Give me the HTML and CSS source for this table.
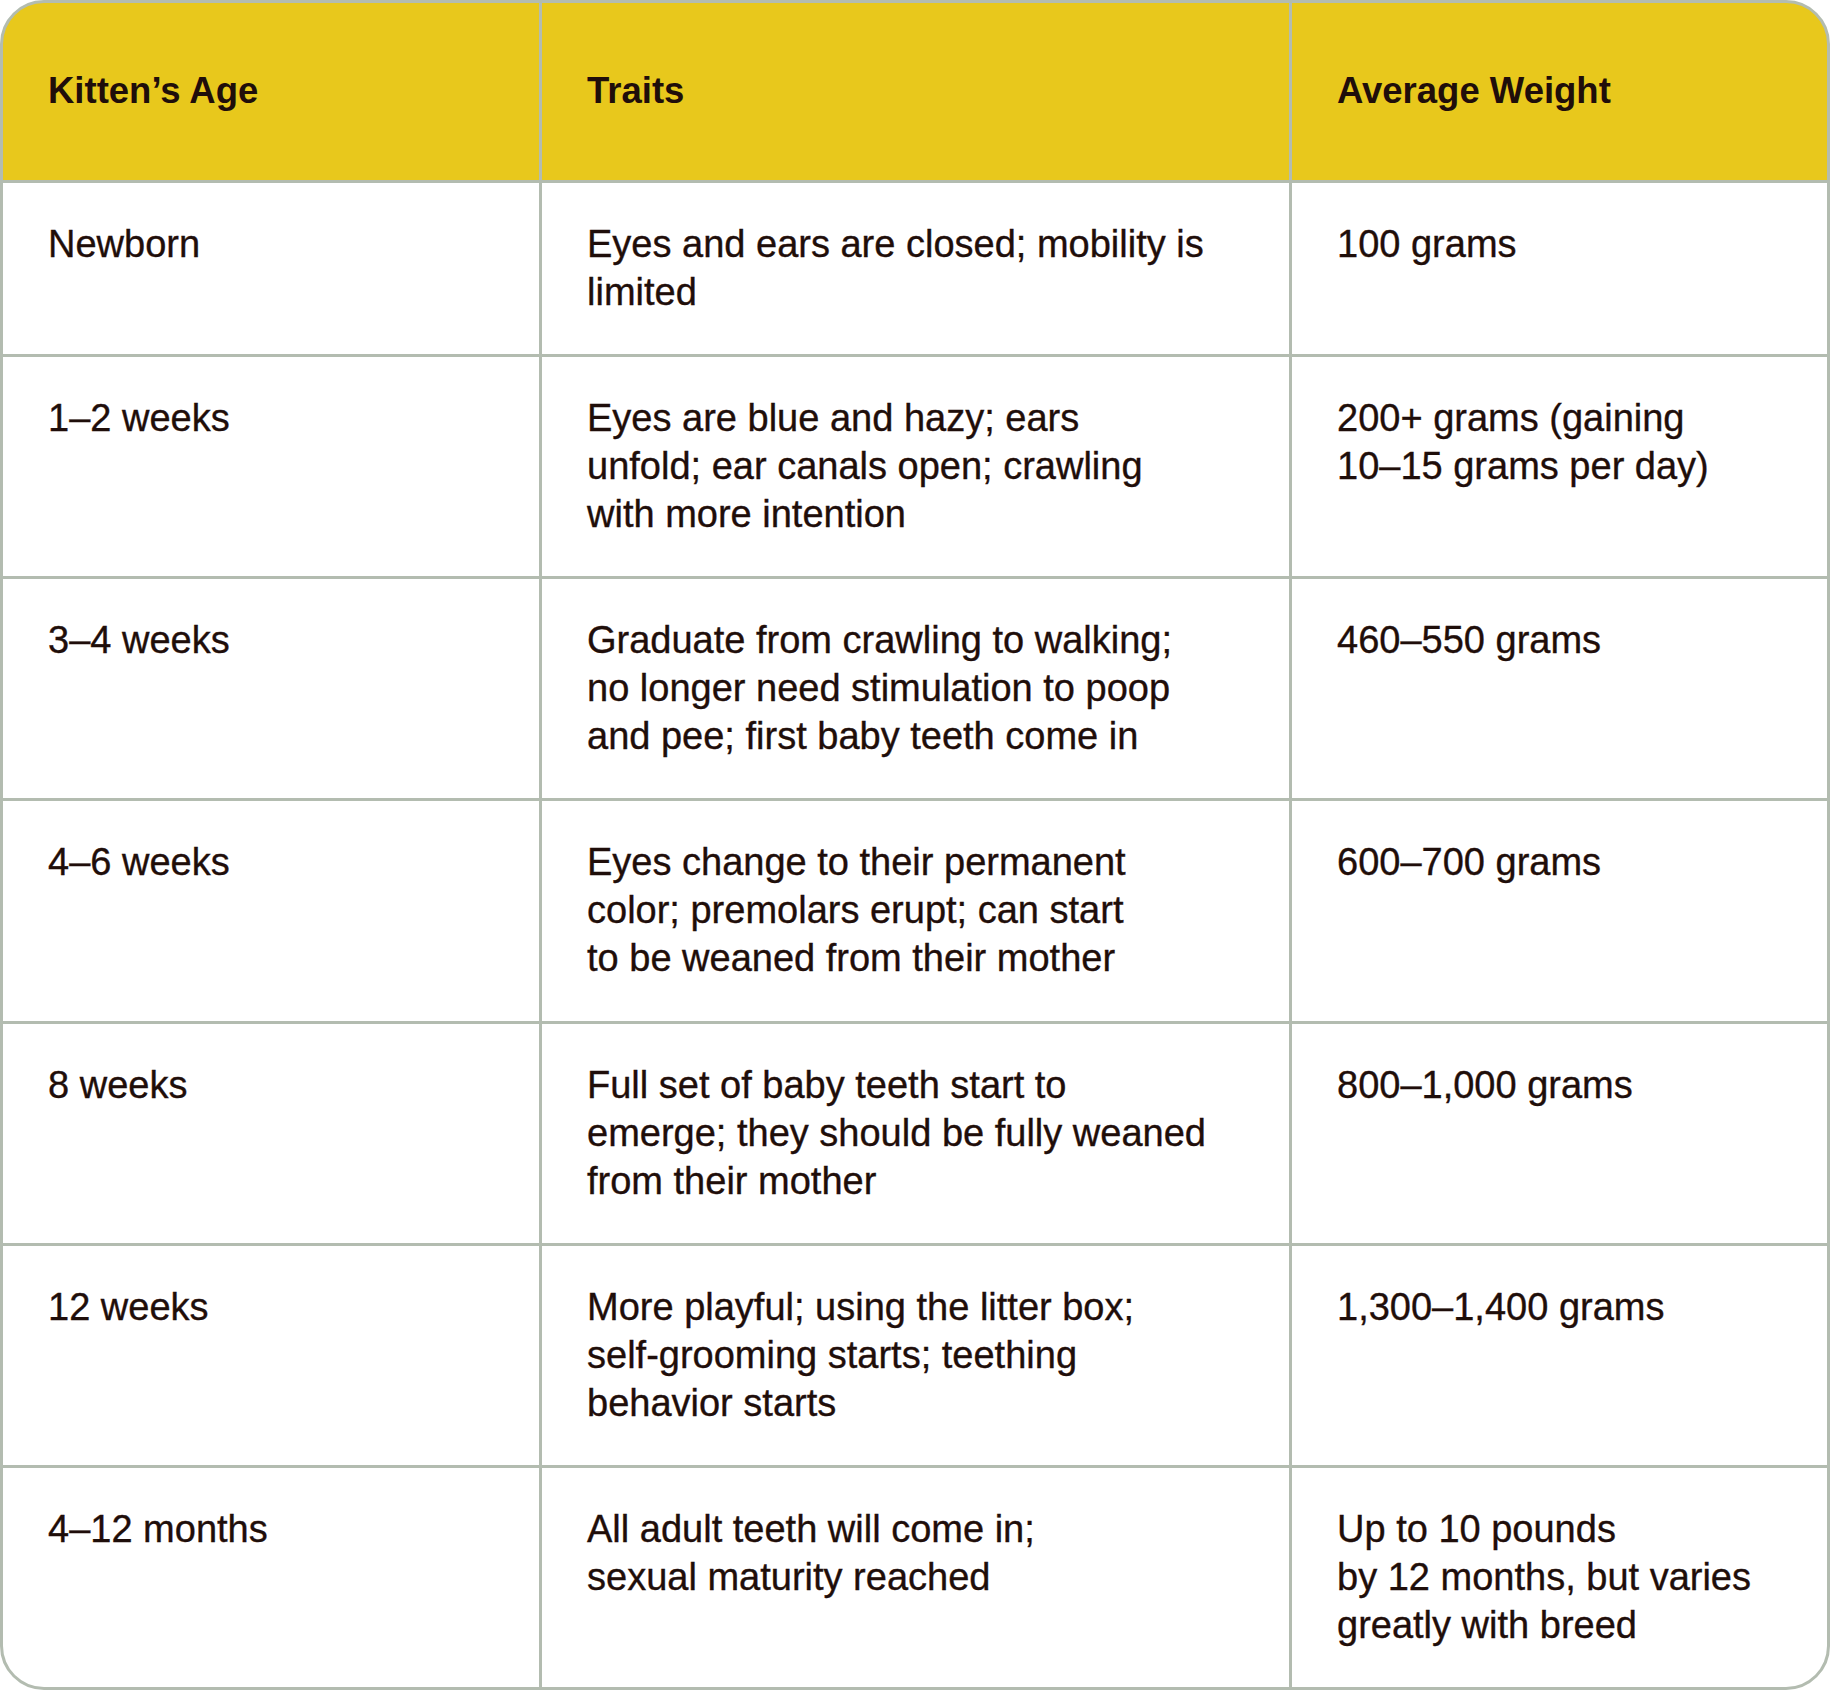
FILE: index.html
```html
<!DOCTYPE html>
<html lang="en">
<head>
<meta charset="utf-8">
<title>Kitten Growth Chart</title>
<link rel="stylesheet" href="styles.css">
</head>
<body>
<div class="chart">
  <div class="cell head">Kitten’s Age</div>
  <div class="cell head">Traits</div>
  <div class="cell head">Average Weight</div>

  <div class="cell">Newborn</div>
  <div class="cell">Eyes and ears are closed; mobility is<br>limited</div>
  <div class="cell">100 grams</div>

  <div class="cell">1–2 weeks</div>
  <div class="cell">Eyes are blue and hazy; ears<br>unfold; ear canals open; crawling<br>with more intention</div>
  <div class="cell">200+ grams (gaining<br>10–15 grams per day)</div>

  <div class="cell">3–4 weeks</div>
  <div class="cell">Graduate from crawling to walking;<br>no longer need stimulation to poop<br>and pee; first baby teeth come in</div>
  <div class="cell">460–550 grams</div>

  <div class="cell">4–6 weeks</div>
  <div class="cell">Eyes change to their permanent<br>color; premolars erupt; can start<br>to be weaned from their mother</div>
  <div class="cell">600–700 grams</div>

  <div class="cell">8 weeks</div>
  <div class="cell">Full set of baby teeth start to<br>emerge; they should be fully weaned<br>from their mother</div>
  <div class="cell">800–1,000 grams</div>

  <div class="cell">12 weeks</div>
  <div class="cell">More playful; using the litter box;<br>self-grooming starts; teething<br>behavior starts</div>
  <div class="cell">1,300–1,400 grams</div>

  <div class="cell">4–12 months</div>
  <div class="cell">All adult teeth will come in;<br>sexual maturity reached</div>
  <div class="cell">Up to 10 pounds<br>by 12 months, but varies<br>greatly with breed</div>
</div>
</body>
</html>
```
FILE: styles.css
```css
html, body {
  margin: 0;
  padding: 0;
  background: #ffffff;
}

.chart {
  width: 1830px;
  height: 1690px;
  box-sizing: border-box;
  border: 3px solid #b3bcb0;
  border-radius: 44px;
  overflow: hidden;
  background: #b3bcb0;
  display: grid;
  grid-template-columns: 536px 747px 1fr;
  grid-template-rows: 177px 171px repeat(6, 1fr);
  gap: 3px;
  font-family: "Liberation Sans", Arial, sans-serif;
  color: #1f0e0a;
}

.cell {
  background: #ffffff;
  padding: 37px 45px 0 45px;
  font-size: 38px;
  line-height: 48px;
  white-space: nowrap;
  -webkit-text-stroke: 0.35px #1f0e0a;
}

.cell.head {
  background: #e8c81c;
  padding: 0 45px 2px 45px;
  display: flex;
  align-items: center;
  font-size: 36.5px;
  font-weight: bold;
  -webkit-text-stroke: 0;
}
```
